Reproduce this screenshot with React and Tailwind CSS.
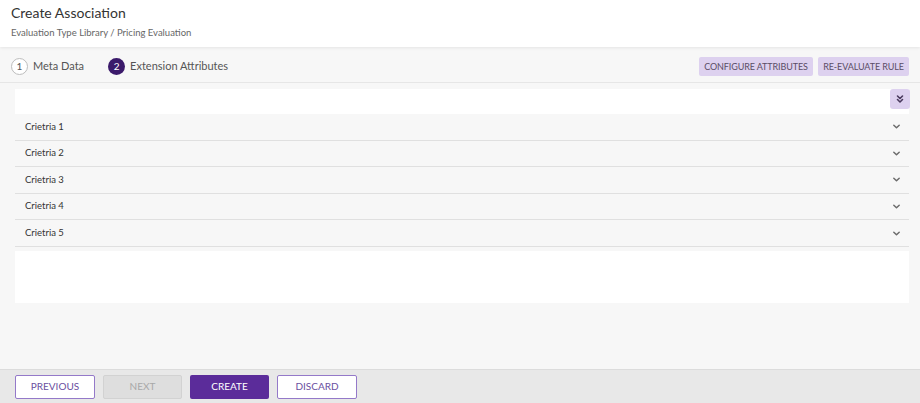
import React from "react";

const Chevron = () => (
  <svg width="9" height="9" viewBox="0 0 10 10" fill="none" stroke="#6b6b6b" strokeWidth="1.6" strokeLinecap="round" strokeLinejoin="round">
    <path d="M2 3.5 L5 6.5 L8 3.5" />
  </svg>
);

const DoubleChevron = () => (
  <svg width="10" height="10" viewBox="0 0 10 10" fill="none" stroke="#4a3a5e" strokeWidth="1.6" strokeLinecap="round" strokeLinejoin="round">
    <path d="M2.5 2 L5 4.5 L7.5 2" />
    <path d="M2.5 5.5 L5 8 L7.5 5.5" />
  </svg>
);

export default function App() {
  const rows = ["Crietria 1", "Crietria 2", "Crietria 3", "Crietria 4", "Crietria 5"];
  return (
    <div className="w-[920px] h-[403px] flex flex-col bg-[#f7f7f7] overflow-hidden" style={{ fontFamily: "Lato, 'Open Sans', sans-serif" }}>
      {/* Header */}
      <div className="h-[47px] bg-white px-[11px] pt-[3px] shadow-[0_1px_3px_rgba(0,0,0,0.08)] relative z-10">
        <div className="text-[14px] leading-[20px] text-[#333]">Create Association</div>
        <div className="text-[9.5px] leading-[14px] mt-[3px] text-[#666]">Evaluation Type Library / Pricing Evaluation</div>
      </div>

      {/* Stepper */}
      <div className="h-[36px] pt-[4px] flex items-center justify-between pl-[11px] pr-[11px] border-b border-[#e6e6e6]">
        <div className="flex items-center">
          <div className="w-[17px] h-[17px] rounded-full border border-[#bdbdbd] bg-white flex items-center justify-center text-[10px] text-[#555]">1</div>
          <span className="ml-[5px] text-[11px] text-[#555]">Meta Data</span>
          <div className="ml-[24px] w-[17px] h-[17px] rounded-full bg-[#3b1a6b] flex items-center justify-center text-[10px] text-white">2</div>
          <span className="ml-[5px] text-[11px] text-[#555]">Extension Attributes</span>
        </div>
        <div className="flex items-center gap-[5px]">
          <button className="h-[19px] w-[114px] rounded-[2px] bg-[#ddd1ef] text-[9px] tracking-[-0.1px] whitespace-nowrap text-[#5a4d66] uppercase">Configure Attributes</button>
          <button className="h-[19px] w-[91px] rounded-[2px] bg-[#ddd1ef] text-[9px] tracking-[-0.1px] whitespace-nowrap text-[#5a4d66] uppercase">Re-Evaluate Rule</button>
        </div>
      </div>

      {/* Content */}
      <div className="flex-1 px-[15px] pt-[6px] pr-[11px]">
        <div className="bg-white">
          <div className="h-[25px] flex justify-end">
            <button className="w-[20px] h-[20px] rounded-[3px] bg-[#ddd1ef] flex items-center justify-center mr-[-1px]">
              <DoubleChevron />
            </button>
          </div>
          {rows.map((r) => (
            <div key={r} className="h-[26.6px] bg-[#f7f7f7] border-b border-[#e0e0e0] flex items-center justify-between pl-[10px] pr-[8px]">
              <span className="text-[9.5px] text-[#333]">{r}</span>
              <Chevron />
            </div>
          ))}
          <div className="h-[4px] bg-[#f7f7f7]" />
          <div className="h-[52px] bg-white" />
        </div>
      </div>

      {/* Footer */}
      <div className="h-[34px] bg-[#e8e8e8] border-t border-[#dcdcdc] flex items-center gap-[8px] px-[15px]">
        <button className="w-[80px] h-[24px] rounded-[2px] bg-white border border-[#9479c9] text-[10px] text-[#6a4fa0] uppercase">Previous</button>
        <button className="w-[79px] h-[24px] rounded-[2px] bg-[#dedede] border border-[#d2d2d2] text-[10px] text-[#a8a8a8] uppercase">Next</button>
        <button className="w-[79px] h-[24px] rounded-[2px] bg-[#5b2c9a] text-[10px] text-white uppercase">Create</button>
        <button className="w-[80px] h-[24px] rounded-[2px] bg-white border border-[#9479c9] text-[10px] text-[#6a4fa0] uppercase">Discard</button>
      </div>
    </div>
  );
}
